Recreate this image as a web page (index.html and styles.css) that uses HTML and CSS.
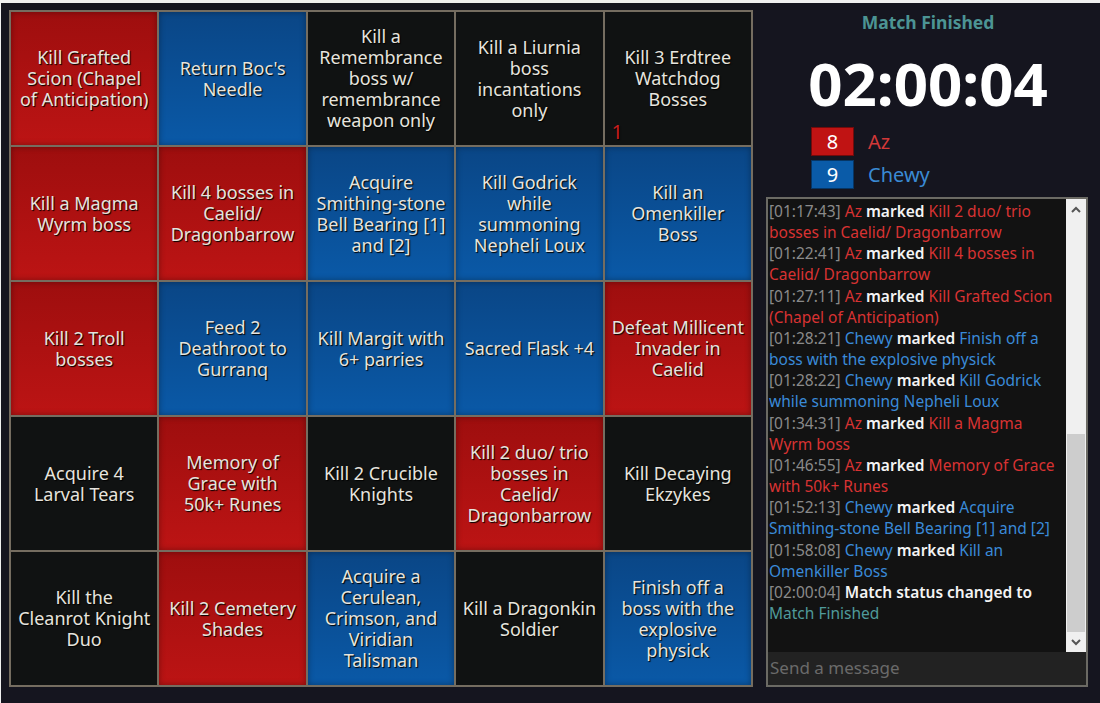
FILE: index.html
```html
<!DOCTYPE html>
<html>
<head>
<meta charset="utf-8">
<link rel="stylesheet" href="styles.css">
</head>
<body>
<div class="app">
  <div class="board">
    <div class="cell red">Kill Grafted Scion (Chapel of Anticipation)</div>
    <div class="cell blue">Return Boc's Needle</div>
    <div class="cell black">Kill a Remembrance boss w/ remembrance weapon only</div>
    <div class="cell black">Kill a Liurnia boss incantations only</div>
    <div class="cell black">Kill 3 Erdtree Watchdog Bosses<span class="marker">1</span></div>

    <div class="cell red">Kill a Magma Wyrm boss</div>
    <div class="cell red">Kill 4 bosses in Caelid/ Dragonbarrow</div>
    <div class="cell blue">Acquire Smithing-stone Bell Bearing [1] and [2]</div>
    <div class="cell blue">Kill Godrick while summoning Nepheli Loux</div>
    <div class="cell blue">Kill an Omenkiller Boss</div>

    <div class="cell red">Kill 2 Troll bosses</div>
    <div class="cell blue">Feed 2 Deathroot to Gurranq</div>
    <div class="cell blue">Kill Margit with 6+ parries</div>
    <div class="cell blue">Sacred Flask +4</div>
    <div class="cell red">Defeat Millicent Invader in Caelid</div>

    <div class="cell black">Acquire 4 Larval Tears</div>
    <div class="cell red">Memory of Grace with 50k+ Runes</div>
    <div class="cell black">Kill 2 Crucible Knights</div>
    <div class="cell red">Kill 2 duo/ trio bosses in Caelid/ Dragonbarrow</div>
    <div class="cell black">Kill Decaying Ekzykes</div>

    <div class="cell black">Kill the Cleanrot&nbsp;Knight Duo</div>
    <div class="cell red">Kill 2 Cemetery Shades</div>
    <div class="cell blue">Acquire a Cerulean, Crimson, and Viridian Talisman</div>
    <div class="cell black">Kill a Dragonkin Soldier</div>
    <div class="cell blue">Finish off a boss with the explosive physick</div>
  </div>

  <div class="side">
    <div class="status">Match Finished</div>
    <div class="timer">02:00:04</div>
    <div class="scores">
      <div class="score-row"><span class="score-box box-red">8</span><span class="name name-red">Az</span></div>
      <div class="score-row"><span class="score-box box-blue">9</span><span class="name name-blue">Chewy</span></div>
    </div>
    <div class="chat">
      <div class="chat-main">
        <div class="log">
          <div class="entry"><span class="ts">[01:17:43]</span> <span class="t-red">Az</span> <span class="t-white">marked</span> <span class="t-red">Kill 2 duo/ trio bosses in Caelid/ Dragonbarrow</span></div>
          <div class="entry"><span class="ts">[01:22:41]</span> <span class="t-red">Az</span> <span class="t-white">marked</span> <span class="t-red">Kill 4 bosses in Caelid/ Dragonbarrow</span></div>
          <div class="entry"><span class="ts">[01:27:11]</span> <span class="t-red">Az</span> <span class="t-white">marked</span> <span class="t-red">Kill Grafted Scion (Chapel of Anticipation)</span></div>
          <div class="entry"><span class="ts">[01:28:21]</span> <span class="t-blue">Chewy</span> <span class="t-white">marked</span> <span class="t-blue">Finish off a boss with the explosive physick</span></div>
          <div class="entry"><span class="ts">[01:28:22]</span> <span class="t-blue">Chewy</span> <span class="t-white">marked</span> <span class="t-blue">Kill Godrick while summoning Nepheli Loux</span></div>
          <div class="entry"><span class="ts">[01:34:31]</span> <span class="t-red">Az</span> <span class="t-white">marked</span> <span class="t-red">Kill a Magma Wyrm boss</span></div>
          <div class="entry"><span class="ts">[01:46:55]</span> <span class="t-red">Az</span> <span class="t-white">marked</span> <span class="t-red">Memory of Grace with 50k+ Runes</span></div>
          <div class="entry"><span class="ts">[01:52:13]</span> <span class="t-blue">Chewy</span> <span class="t-white">marked</span> <span class="t-blue">Acquire Smithing-stone Bell Bearing [1] and [2]</span></div>
          <div class="entry"><span class="ts">[01:58:08]</span> <span class="t-blue">Chewy</span> <span class="t-white">marked</span> <span class="t-blue">Kill an Omenkiller Boss</span></div>
          <div class="entry"><span class="ts">[02:00:04]</span> <span class="t-white">Match status changed to</span> <span class="t-teal">Match Finished</span></div>
        </div>
        <div class="scrollbar">
          <div class="arrow">
            <svg width="10" height="7" viewBox="0 0 10 7"><polyline points="1,6 5,2 9,6" fill="none" stroke="#555" stroke-width="2"/></svg>
          </div>
          <div class="track">
            <div class="thumb"></div>
          </div>
          <div class="arrow">
            <svg width="10" height="7" viewBox="0 0 10 7"><polyline points="1,1 5,5 9,1" fill="none" stroke="#555" stroke-width="2"/></svg>
          </div>
        </div>
      </div>
      <input class="msg" type="text" placeholder="Send a message">
    </div>
  </div>
</div>
</body>
</html>
```
FILE: styles.css
```css
html, body {
  margin: 0;
  padding: 0;
  background: #f0f0f0;
}

body {
  font-family: "Noto Sans", "Open Sans", sans-serif;
}

.app {
  margin: 3px 0 0 1px;
  width: 1099px;
  height: 700px;
  background: #15151f;
  display: flex;
  align-items: flex-start;
}

.board {
  margin: 7px 0 0 8px;
  width: 744px;
  height: 677px;
  box-sizing: border-box;
  padding: 2px;
  gap: 2px;
  background: #756d60;
  display: grid;
  grid-template-columns: repeat(5, 1fr);
  grid-template-rows: repeat(5, 1fr);
}

.cell {
  position: relative;
  display: flex;
  align-items: center;
  justify-content: center;
  text-align: center;
  padding: 0 6px;
  font-size: 18px;
  line-height: 21px;
  color: #e6e4de;
  text-shadow: 1px 1px 1px #000;
}

.red {
  background: linear-gradient(#9e0e0e, #bc1414);
  box-shadow: inset 0 0 6px rgba(0, 0, 0, 0.35);
}

.blue {
  background: linear-gradient(#0a4686, #0a59a7);
  box-shadow: inset 0 0 6px rgba(0, 0, 0, 0.35);
}

.black {
  background: #101212;
}

.marker {
  position: absolute;
  left: 7px;
  bottom: 3px;
  color: #c81e1e;
  font-size: 20px;
  line-height: 20px;
  text-shadow: 1px 1px 1px #000;
}

.side {
  flex: 1;
  padding-left: 3px;
  display: flex;
  flex-direction: column;
}

.status {
  margin-top: 9px;
  text-align: center;
  font-size: 17.5px;
  font-weight: bold;
  line-height: 21px;
  color: #4c9494;
}

.timer {
  margin-top: 20px;
  text-align: center;
  font-size: 60px;
  font-weight: bold;
  line-height: 60px;
  color: #ffffff;
}

.scores {
  margin-top: 14px;
  padding-left: 55px;
  display: flex;
  flex-direction: column;
  gap: 4px;
}

.score-row {
  display: flex;
  align-items: center;
  gap: 14px;
}

.score-box {
  width: 43px;
  height: 29px;
  box-sizing: border-box;
  border: 1px solid rgba(0, 0, 0, 0.4);
  display: flex;
  align-items: center;
  justify-content: center;
  color: #ffffff;
  font-size: 20px;
}

.box-red {
  background: #c01313;
}

.box-blue {
  background: #0a5ba8;
}

.name {
  font-size: 20px;
}

.name-red {
  color: #d23838;
}

.name-blue {
  color: #3a8ad4;
}

.chat {
  margin: 8px 0 0 10px;
  width: 322px;
  height: 490px;
  box-sizing: border-box;
  border: 2px solid #6b6a64;
  display: flex;
  flex-direction: column;
}

.chat-main {
  flex: 1;
  display: flex;
  background: #121212;
  min-height: 0;
}

.log {
  flex: 1;
  padding: 2px 2px 0 1px;
  font-size: 15.5px;
  line-height: 21.15px;
  overflow: hidden;
}

.ts {
  color: #8a8a8a;
}

.t-red {
  color: #d83232;
}

.t-blue {
  color: #3a8ad8;
}

.t-white {
  color: #f4f4f4;
  font-weight: 600;
}

.t-teal {
  color: #4f9a9a;
}

.scrollbar {
  width: 20px;
  background: #f0f0f0;
  display: flex;
  flex-direction: column;
}

.arrow {
  height: 20px;
  display: flex;
  align-items: center;
  justify-content: center;
}

.track {
  flex: 1;
  display: flex;
  flex-direction: column;
  justify-content: flex-end;
  padding: 0 1px 0 1px;
}

.thumb {
  height: 198px;
  background: #cdcdcd;
}

.msg {
  height: 33px;
  box-sizing: border-box;
  margin: 0;
  border: 0;
  padding: 0 2px 3px 2px;
  background: #222222;
  color: #dddddd;
  font-family: "Noto Sans", "Open Sans", sans-serif;
  font-size: 17px;
  outline: none;
}

.msg::placeholder {
  color: #6a6a6a;
}
```
